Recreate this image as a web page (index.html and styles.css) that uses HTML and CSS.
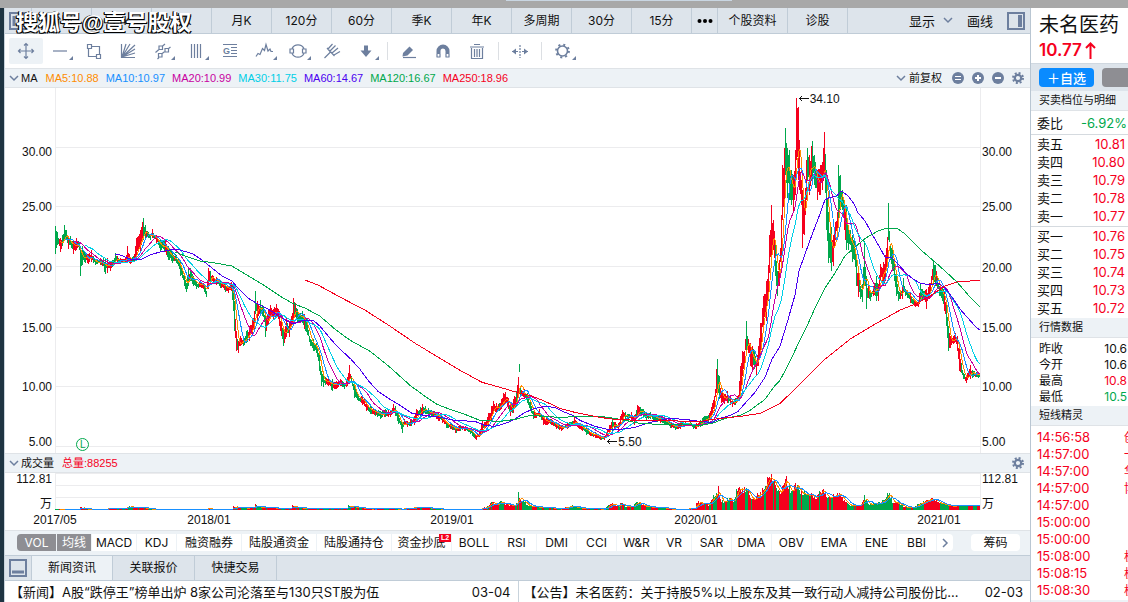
FILE: index.html
```html
<!DOCTYPE html>
<html lang="zh-CN">
<head>
<meta charset="utf-8">
<title>未名医药 - K线</title>
<link rel="stylesheet" href="styles.css">
</head>
<body>
<div class="window-strip"><span class="window-tab"></span></div>
<div class="app">
  <main class="main">
    <nav class="periods">
      <button class="icon-btn list-toggle" aria-label="列表"><svg width="18" height="18" viewBox="0 0 18 18"><rect x="1" y="1" width="16" height="16" fill="none" stroke="#6d7f9e" stroke-width="2"/><path d="M5 4v10" stroke="#6d7f9e" stroke-width="3"/></svg></button>
      <button class="period">分时</button>
      <button class="period">日K</button>
      <button class="period">周K</button>
      <button class="period">月K</button>
      <button class="period">120分</button>
      <button class="period">60分</button>
      <button class="period">季K</button>
      <button class="period">年K</button>
      <button class="period">多周期</button>
      <button class="period">30分</button>
      <button class="period">15分</button>
      <button class="period more" aria-label="更多"><svg width="16" height="6" viewBox="0 0 16 6"><circle cx="2.5" cy="3" r="2"/><circle cx="8" cy="3" r="2"/><circle cx="13.5" cy="3" r="2"/></svg></button>
      <button class="period wide">个股资料</button>
      <button class="period">诊股</button>
      <div class="period-tools">
        <button class="plain">显示<svg class="chev" width="10" height="7" viewBox="0 0 10 7"><path d="M1 1l4 4 4-4"/></svg></button>
        <button class="plain">画线</button>
        <button class="icon-btn" aria-label="侧栏"><svg width="18" height="18" viewBox="0 0 18 18"><rect x="1" y="1" width="16" height="16" fill="none" stroke="#6d7f9e" stroke-width="2"/><path d="M13 3v12" stroke="#6d7f9e" stroke-width="4"/></svg></button>
      </div>
      <span class="watermark">搜狐号@壹号股权</span>
    </nav>

    <div class="toolbar">
      <button class="tool active" aria-label="移动"><svg viewBox="0 0 34 26"><path d="M9.500 13h15M17 5.500v15M11.500 11l-2 2 2 2M22.500 11l2 2-2 2M15 7.500l2-2 2 2M15 18.500l2 2 2-2"/></svg></button>
      <button class="tool" aria-label="直线"><svg viewBox="0 0 34 26"><path d="M10 13h14"/><path class="solid" d="M30 18v4h-4z"/></svg></button>
      <button class="tool" aria-label="矩形"><svg viewBox="0 0 34 26"><path d="M14 8.500h8.500v8M11.500 11v7.500H19M10.500 6.500h4v4h-4zM19.500 16.500h4v4h-4z"/></svg></button>
      <button class="tool" aria-label="扇形线"><svg viewBox="0 0 34 26"><path d="M10.500 6v13.500H24M11 19l13-12M11 19l8-13M11 19l13-8M11 19l4-13M11 19l13-4"/></svg></button>
      <button class="tool" aria-label="平行线"><svg viewBox="0 0 34 26"><path d="M10.500 14.500l4-3.500M17 8.500l3-2.500M14 19.500l-1.500 1.500M16.500 16l4-3M23 11l2.500-2M14 8h3.500v3.500H14zM20 10.500h3.500V14H20zM13.500 15.500H17V19h-3.500z"/><path class="solid" d="M30 18v4h-4z"/></svg></button>
      <button class="tool" aria-label="周期线"><svg viewBox="0 0 34 26"><path d="M12.500 6v14M15.500 6v14M18.500 6v14M21.500 6v14"/><path class="solid" d="M30 18v4h-4z"/></svg></button>
      <button class="tool" aria-label="黄金分割"><svg viewBox="0 0 34 26"><path d="M10 6.500h14M18 9.500h6M18 12.500h6M18 15.500h6M10 18.500h14"/><text x="10" y="16">G</text></svg></button>
      <button class="tool" aria-label="波浪线"><svg viewBox="0 0 34 26"><path d="M9 18.500l2-3 2 1 2.500-6 2 2 1.500-6 2 6.500 2-2 1 2.500h2"/><path class="solid" d="M30 18v4h-4z"/></svg></button>
      <button class="tool" aria-label="圆形"><svg viewBox="0 0 34 26"><path d="M11 10.500a6.700 6.700 0 0 1 12 0M11 15.500a6.700 6.700 0 0 0 12 0M9 11h3.500v4H9zM21.500 11H25v4h-3.500z"/><path class="solid" d="M30 18v4h-4z"/></svg></button>
      <button class="tool" aria-label="叉线"><svg viewBox="0 0 34 26"><path d="M9.500 20l6-6M12 10l7.500 8M15.500 14l-3.500-4M13 11l4.500-5M15 13l5.500-5.500M17 15l6-5M19 17l6-3.500"/></svg></button>
      <button class="tool" aria-label="箭头"><svg viewBox="0 0 34 26"><path class="solid" d="M15 7.500h4v5h3.500L17 19l-5.500-6.500H15z"/><path class="solid" d="M30 18v4h-4z"/></svg></button>
      <span class="tool-sep"></span>
      <button class="tool" aria-label="橡皮"><svg viewBox="0 0 34 26"><path class="solid" d="M11 15l6.500-6.500 3.500 3.500-5.500 5.500-5 1z"/><path d="M11 19.500h13"/></svg></button>
      <button class="tool" aria-label="磁铁"><svg viewBox="0 0 34 26"><path stroke-width="4" d="M12.500 16V13a4.500 4.500 0 0 1 9 0v3"/><path d="M10.500 19h4M19.500 19h4M11 16v3M14 16v3M20 16v3M23 16v3"/></svg></button>
      <button class="tool" aria-label="删除"><svg viewBox="0 0 34 26"><path d="M11.500 10v10.500h11V10M10 9h14M14 6.500h6M14.500 11v8M17 11v8M19.500 11v8"/></svg></button>
      <span class="tool-sep"></span>
      <button class="tool" aria-label="翻转"><svg viewBox="0 0 34 26"><path d="M9 13.500h6M19 13.500h6"/><path stroke-dasharray="2 1" d="M17 7v13"/><path class="solid" d="M9 13.500l4-3v6zM25 13.500l-4-3v6z"/></svg></button>
      <span class="tool-sep"></span>
      <button class="tool" aria-label="设置"><svg viewBox="0 0 34 26"><circle cx="16.500" cy="13" r="5" stroke-width="1.600"/><circle cx="16.500" cy="13" r="6.400" stroke-width="2" stroke-dasharray="2 3.030"/><path class="solid" d="M30 18v4h-4z"/></svg></button>
    </div>

    <div class="info-bar">
      <svg class="chev" width="10" height="7" viewBox="0 0 10 7"><path d="M1 1l4 4 4-4"/></svg>
      <span class="name">MA</span>
      <span class="ma5">MA5:10.88</span><span class="ma10">MA10:10.97</span><span class="ma20">MA20:10.99</span><span class="ma30">MA30:11.75</span><span class="ma60">MA60:14.67</span><span class="ma120">MA120:16.67</span><span class="ma250">MA250:18.96</span>
      <div class="info-tools">
        <button class="plain small"><svg class="chev" width="10" height="7" viewBox="0 0 10 7"><path d="M1 1l4 4 4-4"/></svg>前复权</button>
        <button class="icon-btn" aria-label="等比"><svg width="12" height="12" viewBox="0 0 12 12"><circle cx="6" cy="6" r="6" fill="#6d7f9e"/><path d="M3 4.500h6M3 7.500h6" stroke="#fff"/></svg></button>
        <button class="icon-btn" aria-label="放大"><svg width="12" height="12" viewBox="0 0 12 12"><circle cx="6" cy="6" r="6" fill="#6d7f9e"/><path d="M3 6h6M6 3v6" stroke="#fff" stroke-width="2"/></svg></button>
        <button class="icon-btn" aria-label="缩小"><svg width="12" height="12" viewBox="0 0 12 12"><circle cx="6" cy="6" r="6" fill="#6d7f9e"/><path d="M3 6h6" stroke="#fff" stroke-width="2"/></svg></button>
        <button class="icon-btn" aria-label="指标设置"><svg width="12" height="12" viewBox="0 0 12 12" fill="none" stroke="#6d7f9e"><circle cx="6" cy="6" r="3.200" stroke-width="2.200"/><circle cx="6" cy="6" r="5" stroke-width="2" stroke-dasharray="2 1.927"/></svg></button>
      </div>
    </div>

    <section class="chart price-chart">
      <div class="scale left" id="scaleLeft"></div>
      <div class="plot">
        <svg id="price" viewBox="0 0 925 364" preserveAspectRatio="none"></svg>
        <span class="mark high"><svg width="10" height="7" viewBox="0 0 10 7"><path d="M0 3.500h10M3 1L.5 3.500 3 6"/></svg>34.10</span>
        <span class="mark low"><svg width="10" height="7" viewBox="0 0 10 7"><path d="M0 3.500h10M3 1L.5 3.500 3 6"/></svg>5.50</span>
        <span class="event">L</span>
      </div>
      <div class="scale right" id="scaleRight"></div>
    </section>

    <div class="info-bar">
      <svg class="chev" width="10" height="7" viewBox="0 0 10 7"><path d="M1 1l4 4 4-4"/></svg>
      <span class="name">成交量</span><span class="total">总量:88255</span>
      <div class="info-tools">
        <button class="icon-btn" aria-label="成交量设置"><svg width="12" height="12" viewBox="0 0 12 12" fill="none" stroke="#6d7f9e"><circle cx="6" cy="6" r="3.200" stroke-width="2.200"/><circle cx="6" cy="6" r="5" stroke-width="2" stroke-dasharray="2 1.927"/></svg></button>
      </div>
    </div>

    <section class="chart volume-chart">
      <div class="vol-scale left"><span>112.81</span><span>万</span></div>
      <div class="plot"><svg id="volume" viewBox="0 0 925 37" preserveAspectRatio="none"></svg></div>
      <div class="vol-scale right"><span>112.81</span><span>万</span></div>
    </section>
    <div class="dates" id="dates"></div>

    <nav class="indicators">
      <button class="ind w39 on first">VOL</button><button class="ind w34 on">均线</button><button class="ind w44">MACD</button><button class="ind w39">KDJ</button><button class="ind w64">融资融券</button><button class="ind w74">陆股通资金</button><button class="ind w74">陆股通持仓</button><button class="ind w59">资金抄底<sup class="l2">L2</sup></button><button class="ind w44">BOLL</button><button class="ind w39">RSI</button><button class="ind w39">DMI</button><button class="ind w39">CCI</button><button class="ind w39">W&amp;R</button><button class="ind w34">VR</button><button class="ind w39">SAR</button><button class="ind w39">DMA</button><button class="ind w39">OBV</button><button class="ind w44">EMA</button><button class="ind w39">ENE</button><button class="ind w39">BBI</button><button class="ind w16 last" aria-label="更多指标"><svg class="chev" width="7" height="10" viewBox="0 0 7 10"><path d="M1 1l4 4-4 4"/></svg></button>
      <button class="ind chips">筹码</button>
    </nav>

    <nav class="panels">
      <button class="icon-btn panel-toggle" aria-label="底栏"><svg width="18" height="18" viewBox="0 0 18 18"><rect x="1" y="1" width="16" height="16" fill="none" stroke="#6d7f9e" stroke-width="2"/><path d="M3 13h12" stroke="#6d7f9e" stroke-width="3"/></svg></button>
      <button class="panel on">新闻资讯</button><button class="panel">关联报价</button><button class="panel">快捷交易</button>
    </nav>
    <div class="news">
      <a class="item" href="#"><span class="headline">【新闻】A股“跌停王”榜单出炉 8家公司沦落至与130只ST股为伍</span><time>03-04</time></a>
      <a class="item" href="#"><span class="headline">【公告】未名医药：关于持股5%以上股东及其一致行动人减持公司股份比...</span><time>02-03</time></a>
    </div>
  </main>

  <aside class="side">
    <h1 class="stock">未名医药</h1>
    <div class="price"><span>10.77</span><svg width="11" height="17" viewBox="0 0 11 17"><path d="M5.500 17V2M1 6l4.500-4.500L10 6" fill="none" stroke="#f5001d" stroke-width="2"/></svg></div>
    <div class="actions"><button class="add">＋自选</button><button class="other" aria-label="交易"></button></div>
    <h2 class="head">买卖档位与明细</h2>
    <div class="ratio"><span>委比</span><span class="down">-6.92%</span></div>
    <table class="book">
      <tr><th>卖五</th><td>10.81</td></tr><tr><th>卖四</th><td>10.80</td></tr><tr><th>卖三</th><td>10.79</td></tr><tr><th>卖二</th><td>10.78</td></tr><tr><th>卖一</th><td>10.77</td></tr>
    </table>
    <table class="book buy">
      <tr><th>买一</th><td>10.76</td></tr><tr><th>买二</th><td>10.75</td></tr><tr><th>买三</th><td>10.74</td></tr><tr><th>买四</th><td>10.73</td></tr><tr><th>买五</th><td>10.72</td></tr>
    </table>
    <h2 class="head">行情数据</h2>
    <div class="quotes">
      <div><span>昨收</span><span>10.6</span></div><div><span>今开</span><span>10.6</span></div><div><span>最高</span><span class="up">10.8</span></div><div><span>最低</span><span class="down">10.5</span></div>
    </div>
    <h2 class="head">短线精灵</h2>
    <ul class="ticks">
      <li><time>14:56:58</time><span>创</span></li><li><time>14:57:00</time><span>一</span></li><li><time>14:57:00</time><span>华</span></li><li><time>14:57:00</time><span>博</span></li><li><time>14:57:00</time></li><li><time>15:00:00</time></li><li><time>15:00:00</time></li><li><time>15:08:00</time><span>杭</span></li><li><time>15:08:15</time><span>杭</span></li><li><time>15:08:30</time><span>杭</span></li>
    </ul>
  </aside>
</div>
<script src="chart.js"></script>
</body>
</html>
```

FILE: styles.css
```css
* { box-sizing: border-box; }
body {
  margin: 0;
  height: 100vh;
  overflow: hidden;
  display: flex;
  flex-direction: column;
  background: #fff;
  color: #111;
  font: 12px/16px Inter, "Noto Sans CJK SC", sans-serif;
}
button {
  margin: 0;
  padding: 0;
  border: 0;
  background: none;
  color: inherit;
  font: inherit;
  white-space: nowrap;
}
svg { display: block; flex: none; }
.chev { fill: none; stroke: #6d7f9e; stroke-width: 1.5; }
.up { color: #f5001d; }
.down { color: #00a84c; }

.window-strip { flex: none; height: 8px; background: #a8a8a8; display: flex; align-items: flex-start; justify-content: center; }
.window-tab { width: 20%; height: 1px; margin-left: 110px; background: #c9d6e2; }

.app { flex: 1; min-height: 0; display: flex; border-left: 4px solid #1e3442; }
.main { flex: 1; min-width: 0; display: flex; flex-direction: column; border-left: 1px solid #c8d3dc; }

.periods { position: relative; flex: none; height: 26px; display: flex; background: #dde4eb; border-bottom: 1px solid #c0ccd7; }
.list-toggle { padding: 0 4px; width: 27px; border-right: 1px solid #c0ccd7; }
.icon-btn { display: flex; align-items: center; }
.period { width: 60px; flex: none; border-right: 1px solid #c0ccd7; }
.period.more { width: 26px; display: flex; align-items: center; justify-content: center; }
.period.wide { width: 70px; }
.period-tools { margin-left: auto; padding-right: 5px; display: flex; align-items: center; gap: 14px; }
.plain { display: flex; align-items: center; gap: 8px; font-size: 13px; }
.plain.small { font-size: 11px; gap: 3px; }
.watermark {
  position: absolute;
  left: 11px;
  top: 1px;
  font: 700 22px/28px "Liberation Sans", "Noto Sans CJK SC", sans-serif;
  color: #fff;
  text-shadow: -1px 1px 0 #000, 1px 1px 0 #000, -1px 0 0 #000;
  white-space: nowrap;
}

.toolbar { flex: none; height: 34px; padding: 4px; display: flex; }
.tool { width: 34px; height: 26px; flex: none; border-radius: 2px; }
.tool.active { background: #edf2f6; }
.tool svg { width: 34px; height: 26px; fill: none; stroke: #6d7f9e; stroke-width: 1.2; }
.tool .solid { fill: #6d7f9e; stroke: none; }
.tool text { font: bold 9px "Liberation Sans", sans-serif; fill: #6d7f9e; stroke: none; }
.tool-sep { width: 1px; height: 18px; margin: 4px; background: #dcdfe3; }

.info-bar {
  flex: none;
  height: 20px;
  padding: 0 6px 0 4px;
  display: flex;
  align-items: center;
  background: #edf2f6;
  border-top: 1px solid #dfe3e7;
  border-bottom: 1px solid #dfe3e7;
  font: 11px/16px "Liberation Sans", "Noto Sans CJK SC", sans-serif;
}
.info-bar > span { margin-right: 7px; white-space: nowrap; }
.info-bar > .name { margin: 0 8px 0 2px; }
.info-tools { margin-left: auto; display: flex; align-items: center; gap: 8px; }
.info-tools .plain { margin-right: 2px; }
.ma5 { color: #ff8c00; }
.ma10 { color: #1890ff; }
.ma20 { color: #c800a0; }
.ma30 { color: #00cfe6; }
.ma60 { color: #4b00f0; }
.ma120 { color: #00a84c; }
.ma250, .total { color: #f5001d; }

.chart { display: grid; grid-template-columns: 50px 1fr 50px; }
.price-chart { flex: 1; min-height: 0; }
.plot { position: relative; min-width: 0; min-height: 0; }
.plot > svg { width: 100%; height: 100%; overflow: visible; }
.plot > svg path { fill: none; vector-effect: non-scaling-stroke; stroke-width: 1px; shape-rendering: crispEdges; }
.scale { position: relative; font: 12px/14px "Liberation Sans", sans-serif; }
.scale span { position: absolute; transform: translateY(-50%); }
.scale.left span { right: 3px; }
.scale.right span { left: 2px; }
.mark { position: absolute; display: flex; align-items: center; gap: 1px; font: 12px/14px "Liberation Sans", sans-serif; }
.mark path { fill: none; stroke: #111; }
.mark.high { left: 80.4%; top: 1%; }
.mark.low { left: 59.7%; top: 95%; }
.event {
  position: absolute;
  left: 2.3%;
  top: 96%;
  width: 13px;
  height: 13px;
  border: 1px solid #00a84c;
  border-radius: 50%;
  color: #00a84c;
  font: 10px/11px "Liberation Sans", sans-serif;
  text-align: center;
}
.volume-chart { flex: none; height: 37px; }
.vol-scale { display: flex; flex-direction: column; justify-content: space-between; font: 12px/12px "Liberation Sans", "Noto Sans CJK SC", sans-serif; }
.vol-scale.left { align-items: flex-end; padding-right: 3px; }
.vol-scale.right { padding-left: 2px; }
.dates { position: relative; flex: none; height: 20px; margin: 0 50px; font: 12px/20px "Liberation Sans", sans-serif; }
.dates span { position: absolute; transform: translateX(-50%); }

.indicators { flex: none; height: 25px; padding: 3px 10px 4px 12px; display: flex; gap: 1px; background: #edf2f6; border-top: 1px solid #dfe3e7; }
.ind { flex: none; position: relative; display: flex; align-items: center; justify-content: center; background: #fff; }
.ind.on { background: #8e8e93; color: #fff; }
.first { border-radius: 4px 0 0 4px; }
.last { border-radius: 0 4px 4px 0; }
.chips { margin-left: auto; width: 49px; border-radius: 4px; }
.w16 { width: 16px; }
.w34 { width: 34px; }
.w39 { width: 39px; }
.w44 { width: 44px; }
.w59 { width: 59px; }
.w64 { width: 64px; }
.w74 { width: 74px; }
.l2 { position: absolute; right: 0; top: 0; width: 12px; background: #f5001d; color: #fff; font: bold 7px/8px "Liberation Sans", sans-serif; }

.panels { flex: none; height: 26px; display: flex; background: #dde4eb; border-top: 1px solid #c0ccd7; border-bottom: 1px solid #c0ccd7; }
.panel-toggle { width: 27px; padding: 0 4px; border-right: 1px solid #c0ccd7; }
.panel { width: 82px; border-right: 1px solid #c0ccd7; }
.panel.on { width: 81px; background: #edf2f6; }

.news { flex: none; height: 21px; display: grid; grid-template-columns: 1fr 1fr; font-size: 13px; line-height: 22px; }
.item { min-width: 0; display: flex; padding: 0 7px 0 5px; color: inherit; text-decoration: none; }
.item + .item { border-left: 1px solid #c8d3dc; }
.headline { flex: 1; min-width: 0; margin-right: 16px; overflow: hidden; text-overflow: ellipsis; white-space: nowrap; }

.side { flex: none; width: 98px; overflow: hidden; border-left: 1px solid #b9c6d2; display: flex; flex-direction: column; }
.stock { flex: none; margin: 0; padding: 4px 8px 0; font-size: 20px; line-height: 26px; font-weight: 400; white-space: nowrap; }
.price { flex: none; height: 25px; padding-left: 8px; display: flex; align-items: center; gap: 3px; color: #f5001d; font-size: 17px; line-height: 25px; font-weight: 600; }
.actions { flex: none; height: 28px; padding: 4px 0 4px 8px; display: flex; gap: 8px; background: #dde4eb; border-top: 1px solid #d0d8e0; }
.add { flex: none; width: 55px; border-radius: 4px; background: #0a8bff; color: #fff; font-size: 13px; font-weight: 500; }
.other { flex: none; width: 55px; border-radius: 4px; background: #8e8e93; }
.head { flex: none; height: 20px; margin: 0; padding-left: 8px; background: #edf2f6; border-bottom: 1px solid #dfe3e7; font-size: 11px; line-height: 19px; font-weight: 400; white-space: nowrap; }
.ratio { flex: none; height: 24px; padding: 0 1px 0 6px; display: flex; justify-content: space-between; align-items: center; border-bottom: 1px solid #d5dadf; font-size: 13px; }
.book { flex: none; width: 100%; border-collapse: collapse; }
.book th { height: 18px; padding: 0 0 0 6px; font-size: 13px; line-height: 18px; font-weight: 400; text-align: left; }
.book td { height: 18px; padding: 0 3px 0 0; font-size: 13px; line-height: 18px; text-align: right; color: #f5001d; }
.buy { border-top: 1px solid #d5dadf; margin: 1px 0; }
.quotes { flex: none; padding: 3px 0 1px 8px; }
.quotes div { height: 16px; padding-right: 1px; display: flex; justify-content: space-between; line-height: 16px; }
.ticks { flex: none; margin: 0; padding: 3px 0 1px 6px; list-style: none; color: #f5001d; border-bottom: 4px solid #edf2f6; }
.ticks li { height: 17px; display: flex; font-size: 12px; line-height: 17px; }
.ticks time { flex: none; width: 87px; font-size: 13px; }
.ticks span { flex: none; }
```

FILE: chart.js
```js
// Price range keyframes: x, high, low (chart units, origin at the plot's left/top offset 55/88).
const RANGE = `55,226,254 57,232,245 60,238,252 62,235,246 64,225,241 66,230,240 68,237,249 70,236,245 73,240,254 76,238,250 79,242,250 80,246,275 82,246,265 85,252,263 88,254,264 91,250,262 95,260,265 100,258,265 105,258,273 107,258,272 110,262,270 115,253,263 120,258,264 125,258,262 127,246,262 130,257,264 134,254,262 136,238,260 140,230,252 143,218,240 145,225,240 148,232,238 150,234,240 152,229,238 156,235,243 160,240,252 165,240,252 168,246,260 172,252,263 176,255,263 180,262,275 184,275,285 186,282,291 188,268,285 190,268,280 193,275,285 196,280,288 200,280,286 204,283,291 206,290,296 208,268,288 210,270,282 213,275,283 216,276,284 220,280,287 225,282,291 228,285,292 231,281,290 233,286,310 234,300,330 236,330,350 238,340,352 240,335,345 243,338,345 246,330,342 249,325,340 252,318,335 254,310,330 255,290,313 257,300,320 260,299,315 263,305,316 265,315,336 268,308,324 270,304,318 273,308,318 276,303,316 279,310,325 281,320,335 283,328,345 286,317,336 289,320,336 291,315,325 293,297,322 295,302,316 297,308,322 300,312,320 302,310,322 304,313,328 307,320,334 310,338,345 313,338,350 316,342,352 319,350,370 321,370,385 323,375,386 325,376,384 328,378,385 332,378,390 336,380,388 340,378,385 344,382,388 347,376,385 349,364,382 351,375,382 354,385,397 358,395,400 362,394,404 366,402,410 370,405,413 375,408,415 380,410,418 385,408,416 390,409,416 393,403,412 395,405,415 398,413,423 401,420,428 402,422,432 404,418,424 407,420,426 411,418,425 414,415,424 416,408,420 420,406,416 422,403,414 425,405,413 428,407,416 431,409,416 434,410,416 438,412,420 442,415,422 446,420,427 450,422,428 455,425,432 460,424,430 465,425,430 470,427,433 474,432,437 476,434,439 479,430,436 482,420,432 485,421,427 488,412,425 491,405,420 493,400,410 496,402,412 499,402,410 501,398,408 503,392,405 505,391,403 508,397,408 510,405,415 513,398,412 516,390,405 518,376,395 519,363,371 520,385,396 522,390,395 524,388,398 527,392,402 530,400,410 533,410,418 536,412,417 539,408,416 543,415,424 547,417,424 551,418,424 556,422,428 561,424,430 567,422,428 572,420,425 574,416,425 577,421,426 582,424,430 586,425,434 590,431,435 595,431,437 600,435,439 604,435,439 607,428,436 609,424,431 612,418,430 615,421,428 618,422,430 620,415,425 622,409,418 625,411,418 628,413,420 631,411,418 634,414,424 637,404,415 640,406,415 643,408,416 646,412,420 650,411,418 655,414,420 660,414,422 665,418,424 670,421,427 675,424,429 680,422,428 685,421,425 690,421,425 693,423,428 696,422,428 700,419,426 704,415,422 708,414,421 711,406,416 714,395,410 716,368,392 717,358,388 719,375,398 721,390,402 724,393,403 727,390,402 730,396,404 732,399,406 735,397,404 738,394,400 740,365,398 742,350,375 744,350,362 746,320,350 748,338,352 750,342,365 752,345,370 754,350,368 756,360,374 758,345,365 760,322,352 763,295,328 766,280,320 768,265,300 769,235,272 771,205,260 773,220,250 775,240,275 777,270,295 779,260,285 781,215,262 782,165,220 784,148,200 785,128,175 787,148,198 789,150,200 791,170,205 793,175,212 795,150,195 796,98,160 798,107,180 799,140,190 801,180,205 802,190,248 804,200,235 806,160,200 807,148,180 809,155,195 812,141,180 814,155,185 817,170,200 820,165,195 822,162,190 824,132,178 826,170,230 828,212,263 831,227,270 833,235,266 835,222,240 837,212,230 838,165,220 840,175,210 842,190,210 844,200,230 846,205,250 848,230,250 850,230,245 852,235,262 854,240,260 856,260,285 858,270,296 860,285,298 862,283,301 864,241,280 866,275,308 868,282,297 870,290,300 873,285,295 876,275,300 878,283,300 880,264,280 883,262,285 885,255,280 887,237,262 888,203,240 890,245,260 892,250,270 894,262,280 896,275,295 898,290,300 902,285,298 903,277,292 905,288,295 910,292,302 915,300,306 918,300,306 920,283,300 924,290,299 926,288,308 929,282,298 933,260,283 935,265,285 936,270,285 939,285,295 942,285,300 944,290,310 946,300,325 948,325,350 950,335,347 953,335,343 955,332,341 957,335,350 959,345,370 961,362,372 963,372,378 966,375,382 970,364,378 973,370,376 976,371,376 980,373,379`;

const MA60 = `115,253 120,254 130,258 140,259 150,254 160,251 170,249 180,249 193,253 202,259 212,267 222,275 232,280 238,287 248,297 258,303 268,308 278,314 287,320 294,323 300,320 309,319 313,319 320,325 330,337 338,346 351,358 360,368 368,379 378,390 390,398 400,404 412,412 425,414 440,416 455,419 475,420 485,424 495,425 508,421 516,417 525,411 535,407 545,405 555,406 565,411 573,414 580,419 595,425 608,428 620,428 635,426 650,421 660,419 670,417 685,418 700,420 712,421 720,417 730,414 738,410 745,402 755,391 765,376 772,358 780,345 787,322 795,294 799,270 805,253 812,234 820,213 825,199 829,197 837,195 841,190 848,195 854,203 858,212 865,220 872,233 880,247 885,256 892,257 898,263 906,272 913,278 920,282 930,284 938,282 945,287 952,296 960,308 968,317 976,326 980,329`;
const MA120 = `175,251 185,255 200,260 215,262 232,265 240,270 262,283 280,295 292,302 305,307 320,315 335,328 350,339 370,350 390,366 410,384 425,395 437,403 450,408 465,413 480,419 500,420 515,418 530,414 545,415 560,416 580,415 600,415 615,417 640,422 660,423 680,423 700,424 712,422 725,417 740,414 750,409 765,398 775,384 780,379 790,360 798,343 806,327 815,307 825,287 835,272 845,255 855,246 866,237 878,230 888,227 898,228 905,233 915,243 922,250 935,261 945,270 957,281 970,296 980,306`;
const MA250 = `305,279 318,284 340,296 365,309 390,325 415,342 440,357 460,369 482,381 500,386 520,392 530,394 545,400 560,407 575,411 600,416 615,418 640,419 660,419 690,420 700,420 720,417 740,415 760,412 780,402 800,383 825,358 850,338 875,323 900,309 915,303 930,295 945,285 957,281 970,280 980,279`;
const VOLUME = `55,1 79,1 80,3 85,1 107,1 108,2 126,2 128,4 140,3 150,1 207,1 208,2 210,1 232,1 233,4 240,3 245,2 254,3 255,8 257,4 265,3 275,2 291,2 292,5 300,2 320,2 347,2 348,5 355,3 370,1 383,2 400,1 420,3 440,1 480,1 487,4 492,10 495,6 501,10 505,7 512,5 517,8 518,24 519,13 523,10 528,5 535,4 545,3 560,1 573,5 580,2 605,1 607,5 612,7 617,4 621,9 625,4 632,4 637,9 642,6 650,4 660,3 670,1 685,1 695,2 696,10 700,8 706,8 708,5 712,15 716,20 718,24 720,11 725,10 729,14 733,8 736,22 740,26 744,24 747,24 750,16 755,12 758,20 761,20 765,30 769,36 772,36 776,24 781,19 783,30 786,34 790,22 796,30 800,20 805,22 810,18 815,15 820,20 823,28 826,14 832,17 838,21 845,10 850,5 860,6 864,16 868,6 880,9 885,12 888,21 892,10 900,7 905,3 915,4 920,8 932,14 940,8 950,5 970,6 980,4`;

const RED = '#f5001d', GREEN = '#00a84c';
const X0 = 55, Y0 = 88, COUNT = 925;
const parse = s => s.split(' ').map(p => p.split(',').map(Number));

let seed = 7;
const random = () => (seed = (seed * 16807) % 2147483647) / 2147483647;

function sample(keys, x, column) {
  let i = 1;
  while (i < keys.length - 1 && keys[i][0] < x) i++;
  const a = keys[i - 1], b = keys[i];
  const t = Math.min(1, Math.max(0, (x - a[0]) / (b[0] - a[0])));
  return a[column] + (b[column] - a[column]) * t;
}
const path = (d, color) => `<path d="${d}" stroke="${color}"/>`;
const polyline = pts => 'M' + pts.map(p => p[0].toFixed(1) + ' ' + p[1].toFixed(1)).join('L');
function average(values, n, from) {
  const out = [];
  for (let i = from; i < values.length; i++) {
    const part = values.slice(Math.max(0, i - n + 1), i + 1);
    out.push([i + 0.5, part.reduce((a, b) => a + b, 0) / part.length]);
  }
  return out;
}

function drawPrice() {
  const keys = parse(RANGE), exact = new Set(keys.map(k => k[0]));
  const closes = [];
  let red = '', green = '', up = false;
  for (let i = 0; i < COUNT; i++) {
    const x = X0 + i;
    let high = sample(keys, x, 1) - Y0, low = sample(keys, x, 2) - Y0;
    const mid = (high + low) / 2, size = low - high;
    if (!exact.has(x)) { high += size * 0.35 * random(); low -= size * 0.35 * random(); }
    const next = (sample(keys, x + 2, 1) + sample(keys, x + 2, 2)) / 2 - Y0;
    const bias = Math.max(-0.35, Math.min(0.35, (mid - next) / 12));
    if (random() < 0.6) up = random() < 0.55 + bias;
    const bar = `M${i + 0.5} ${Math.round(high)}V${Math.round(low)}`;
    if (x === 519 || x === 888 || x === 785 || x === 143) green += bar;
    else if (up || x === 796 || x === 824) red += bar;
    else green += bar;
    closes.push(mid);
  }
  let grid = '';
  for (const y of [59.5, 118.5, 178.5, 238.5, 297.5, 357.5]) grid += `M0 ${y}H925`;
  grid += 'M0.5 0V364M925.5 0V364';
  const traced = s => polyline(parse(s).map(p => [p[0] - X0, p[1] - Y0 + 0.5]));
  document.getElementById('price').innerHTML =
    path(grid, '#ececee') + path(red, RED) + path(green, GREEN) +
    path(polyline(average(closes, 5, 4)), '#ff8c00') +
    path(polyline(average(closes, 10, 9)), '#1890ff') +
    path(polyline(average(closes, 20, 19)), '#c800a0') +
    path(polyline(average(closes, 30, 29)), '#00cfe6') +
    path(traced(MA60), '#4b00f0') + path(traced(MA120), GREEN) + path(traced(MA250), RED);
}

function drawVolume() {
  const keys = parse(VOLUME), values = [];
  let red = '', green = '', up = true;
  for (let i = 0; i < COUNT; i++) {
    let h = sample(keys, X0 + i, 1);
    if (h > 3) h *= 0.7 + 0.3 * random();
    if (random() < 0.45) up = random() < 0.62;
    const bar = `M${i + 0.5} 37V${Math.round(37 - Math.max(1, h))}`;
    if (up && i !== 463 && i !== 833) red += bar; else green += bar;
    values.push(Math.min(36.4, 37.2 - h));
  }
  document.getElementById('volume').innerHTML =
    path('M0 .5H925M0 12.500H925M0 24.500H925M.5 0V37M925.500 0V37', '#ececee') +
    path(red, RED) + path(green, GREEN) +
    path(polyline(average(values, 5, 4)), '#ff8c00') + path(polyline(average(values, 10, 9)), '#1890ff');
}

const ticks = [['30.00', 64], ['25.00', 119], ['20.00', 179], ['15.00', 239], ['10.00', 298], ['5.00', 353]];
const tickHtml = ticks.map(t => `<span style="top:${(t[1] / 3.64).toFixed(2)}%">${t[0]}</span>`).join('');
document.getElementById('scaleLeft').innerHTML = tickHtml;
document.getElementById('scaleRight').innerHTML = tickHtml;
document.getElementById('dates').innerHTML = [['2017/05', 0], ['2018/01', 154], ['2019/01', 397], ['2020/01', 641], ['2021/01', 884]]
  .map(d => `<span style="left:${(d[1] / 9.25).toFixed(2)}%">${d[0]}</span>`).join('');
drawPrice();
drawVolume();
```
